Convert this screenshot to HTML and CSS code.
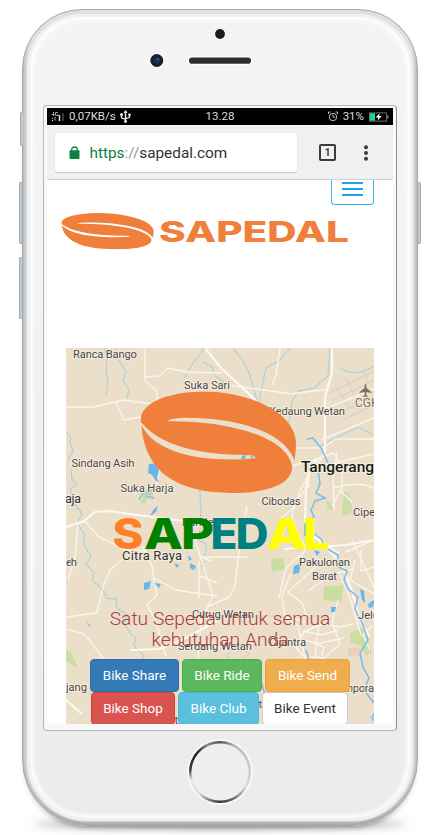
FILE: index.html
```html
<!DOCTYPE html>
<html lang="id">
<head>
<meta charset="utf-8">
<title>Sapedal</title>
<link rel="stylesheet" href="styles.css">
</head>
<body>
<svg class="defs" aria-hidden="true">
  <symbol id="bowl" viewBox="140.500 391 155.500 102" preserveAspectRatio="none">
    <path d="M168 421C215 420 284 432 292 465C294 485 265 493 232 493C170 493 144 466 141.500 425C158 458 215 462 255 458C256 456.500 254 455 250 455C215 455 165 451 141 422C138 402 170 391 205 391C255 392 296 415 296 443C296 450 295 455 294.500 460C283 429 230 417 185 417.500C175 418 169 418.500 168 421Z"/>
  </symbol>
</svg>
<div class="phone">
  <i class="key mute"></i><i class="key up"></i><i class="key down"></i><i class="key power"></i>
  <div class="face">
    <div class="top">
      <svg width="110" height="50" viewBox="148 24 110 50">
        <circle cx="220" cy="34" r="5.800" fill="#fff"/><circle cx="220" cy="34" r="4.900" fill="#1b1c1e"/>
        <circle cx="156.800" cy="60.500" r="7.500" fill="#fff"/><circle cx="156.800" cy="60.500" r="6.500" fill="#1c1e24"/><circle cx="157" cy="60.500" r="3.200" fill="#1c2a5c"/><circle cx="158" cy="59" r="1.200" fill="#405691"/>
        <rect x="188" y="56.500" width="64" height="8.500" rx="4.200" fill="#fff"/><rect x="189" y="57.500" width="62" height="6.300" rx="3.100" fill="#2a2e31"/>
      </svg>
    </div>
    <div class="bezel">
      <div class="screen">
        <div class="status">
          <div class="side">
            <svg width="14" height="12" viewBox="0 0 14 12"><g stroke="#ddd" fill="none"><path d="M.5 3.500h3M2.500 1v4M4.500 1.500h2.500M4.500 1.500v3h2.500v-1.500" stroke-width=".7"/><path d="M1.500 7v1M1.500 9v1M4 6v4" stroke-dasharray="1.200 .6"/><path d="M8.500 4v6" stroke-width="1.500"/><path d="M12 2v8" stroke="#888" stroke-width=".8"/></g></svg>
            <span class="rate">0,07KB/s</span>
            <svg width="11" height="13" viewBox="0 0 11 13" fill="none" stroke="#eee" stroke-width="1.400"><path d="M5.500 1v11M1.500 4v3.500q0 1 4 1.500M9.500 4v3q0 1-4 1.500"/><path d="M5.500 0l2 3h-4z" fill="#eee" stroke="none"/><circle cx="5.500" cy="11.500" r="1.400" fill="#eee" stroke="none"/><circle cx="1.500" cy="4.500" r=".8"/><path d="M8.300 3.600h2.400v2h-2.400z" fill="#eee" stroke="none"/></svg>
          </div>
          <span class="clock">13.28</span>
          <div class="side end">
            <svg width="10" height="11" viewBox="0 0 10 11" fill="none" stroke="#ccc" stroke-width=".9"><circle cx="5" cy="6" r="3.700"/><path d="M5 3.500v2.700h2M.5 3.200V1h2M9.500 3.200V1h-2"/></svg>
            <span class="percent">31%</span>
            <svg width="20" height="10" viewBox="0 0 20 10"><rect x=".5" y=".9" width="17" height="8.200" fill="none" stroke="#888" stroke-width=".8"/><rect x="1" y="1.300" width="5" height="7.400" fill="#18db8c"/><path d="M10.500 1.300L6.700 5.600h2.500l-.5 3 4-4.500h-2.500z" fill="#fff"/><path d="M18.800 3.500v3" stroke="#aaa"/></svg>
          </div>
        </div>
        <div class="browser">
          <div class="address">
            <svg width="11" height="14" viewBox="0 0 11 14"><path d="M2.700 6V3.600q0-2.600 2.800-2.600t2.800 2.600V6" fill="none" stroke="#0b8043" stroke-width="1.300"/><rect x=".5" y="4.200" width="10" height="8.800" rx="1" fill="#0b8043"/></svg>
            <span class="url"><b>https</b><i>://</i>sapedal.com</span>
          </div>
          <span class="tabs">1</span>
          <svg class="more" width="6" height="16" viewBox="0 0 6 16" fill="#383b40"><circle cx="3" cy="2.200" r="2"/><circle cx="3" cy="8" r="2"/><circle cx="3" cy="13.700" r="2"/></svg>
        </div>
        <div class="page">
          <div class="menu"><span></span><span></span><span></span></div>
          <svg class="brand" width="290" height="38" viewBox="61 212 290 38">
            <use href="#bowl" x="61.300" y="213" width="92.500" height="36.300" fill="#f07f3c"/>
            <text class="word" x="159" y="241.500" font-size="28" textLength="190" lengthAdjust="spacingAndGlyphs" fill="#f07f3c">SAPEDAL</text>
          </svg>
          <div class="hero">
            <svg class="map" width="308" height="376" viewBox="66 348 308 376">
              <rect x="66" y="348" width="308" height="376" fill="#ebdfca"/>
              <g fill="#c9dea0">
                <path d="M66 650l5 2 7 16-12-7zM141 489l4 1 3 9-4 6-3-3 2-5zM150 488l4 1-1 8-3-1zM271 559l12-2 2 12-13 3zM324 587l20-2-3 17-18-2zM344 491l5 2 4 20-11 3zM326 500l6 4 2 6-6-1zM350 634l12-6 10 24-6 4-5-10-10-3z"/>
              </g>
              <path d="M348 648h12v8h-12z" fill="#e9cfbc"/>
              <g fill="none" stroke="#d8d0c4" stroke-width="1.200"><path d="M329 393l45-22M334 400l40-20M335 386l15 22M346 379l12 24M364 372l4 10M342 420l32-15M345 410l29-12M226 655l13-11 10 10-14 12z"/></g>
              <g fill="none" stroke="#abd0d8" stroke-width="1.100">
                <path d="M105 348l2 12-1 12 2 10-2 14M115 348l4 12 7 12-3 8 6 10-2 8M205 348l-12 15-9 15M203 362l9 5 3 9 9 6M233 348l10 13 7 14 7 26M290 348l-10 12-14 8-8 38M330 348l-2 28-14 12-15 3-7 10-5 36M340 368q16 10 34-2M320 446l20-10 18-9 16 8M66 432l5 6-1 5 3 8-5 9M71 470l1 9 5 6-7 4 3 10"/>
                <path d="M75 504l7 10-5 10 7 9 0 12 7 11-5 8 8 9-2 7 11 10 4 8 9 1 1 9 10 7-3 8 7 11 5 4-2 8 10 10-5 10-9 6 2 9-3 12M200 490l1 28-2 22 8 5-5 22" stroke-dasharray="3 1" stroke-width="1.500"/>
                <path d="M139 500l5-9 5 3 5-7M145 496l9 2" stroke="#8cc9d6" stroke-width="1.800"/>
              </g>
              <g fill="none" stroke="#faf5ec" stroke-width="1.400" stroke-linejoin="round">
                <path d="M145 348v33l12 10 0 12 21-5 17-6 50 14M145 377l14-1 9-8 19 4 35 1M116 402l8 18 16-3 10 14M66 407h27l30-7 60 8M280 348l-4 28-4 9M220 384l72 10 36-5"/>
                <path d="M325 409l49-20M321 440l53-22M292 448h30l14-9h38M326 465l48-11M291 466l20-5 23-8 8 15 0 20-10 18M322 458l-12 14-11 21-4 14-15 12M337 452l-4 28 1 30M333 488q30-8 41 1M340 490l12 12"/>
                <path d="M84 520l14 16 27 14 22 1M78 524l-3 35-7 20M142 546l10 20 2 14 3 15-10 10 8 14 6 20 5 17M154 578l22 12 19 3 22 3M213 596l-12 25-4 48M199 561v37M212 561l-13-4h48M200 576l17 7M213 596l-11-35-7-21M125 557l-14 12-7 15-5 20-2 9-31 4M66 629l18 5 7 8 14 19-8 22 4 20-3 21M160 465l-4 25M247 506l-8 45-4 35-6 11-22 10"/>
                <path d="M310 484l-16 20-4 28 16 14M306 550l-20 18-7 30M291 573l-9 23 3 20 20 6M318 565l-30 27 15 12 4 15M340 575l9 20 12 40M352 540l12 25 10 23M346 552l28-12M355 560l-5 20 24 14M361 550l0 21 13-4M308 591l24-16 20-6M286 617l12 9 7 33M205 611l17 2M338 600l-6 22 8 22-16 14-21-2-8-10 10-15 18-7 16 3 14-3M303 631l19 4 16-5M309 641l15 6-2 9M319 623l-4 34M296 640l25 3 23-5M373 625l-10 10 7 15"/>
              </g>
              <g fill="none" stroke="#fcf9f2" stroke-width="2.200"><path d="M332 348l0 25-7 24v55l-3 4M66 527l18-6 11-9 13-1 90 12M205 348l16 20 28 26 13 13M317 459l-7 10-4 20-1 34 6 11 28 20M284 549l62-4 28-5M313 535l29 29 10 27 9 32 9 14M304 660l8 26-4 18M66 700l16 14M130 650l30-1 30-13 30-17"/></g>
              <g fill="none" stroke="#76bcec" stroke-width="1.500">
                <path d="M307 439l6-1 8 10 7 15M318 470l2 14-4 9 9 5-10 3-4 9 3 7-9 7v12M310 531l11 8 5 9 12 7-1 11 10 5-3 9 4 9 10 8-3 12 7 14 6 17-8 13 3 14 6 11-5 12 9 12 5-6-2 14-4 8 8 11-9 12 2 14-7 8M261 681l6 20M306 650l3 10"/>
              </g>
              <g fill="#69b6ed"><path d="M149 464l8-1 2 8-2 7 2 4-3-1-4-6-4-2zM154 509l4-3-2 6-6 4zM144 583l7-2-2 8-5 1zM154 583l7 1-2 4zM174 563l5 2-2 3zM188 555l4 4-3 2zM190 563l6 3-2 4-4-2zM294 566l7-3-2 10-6 1zM314 550l6 2-3 4zM360 589l4 2 1 12-3-3zM368 604l7-5-2 8-4 1zM331 607l5 0-1 5-4 0zM86 621l5 5-1 1zM242 456l4-1-1 4-4 0zM250 456l5 1-4 1z"/></g>
              <path d="M365.500 384q1 0 1 4l5 4v1l-5-1-.3 3 1.500 1v1l-2.200-.5-2.200.5v-1l1.500-1-.3-3-5 1v-1l5-4q0-4 1-4z" fill="#80705f"/>
              <g class="labels">
                <text x="73" y="358" textLength="64">Ranca Bango</text><text x="184" y="389" textLength="46">Suka Sari</text><text x="269" y="414.500" textLength="76">Kedaung Wetan</text>
                <text x="355" y="407" class="airport">CGK</text><text x="71.500" y="466.500" textLength="63">Sindang Asih</text><text x="301" y="471.500" class="city" textLength="73">Tangerang</text>
                <text x="120.500" y="491.500" textLength="53">Suka Harja</text><text x="65" y="503" class="town" textLength="16">aja</text><text x="261.500" y="505" textLength="39">Cibodas</text><text x="353" y="516">Cipe</text>
                <text x="182" y="526">Bunder</text><text x="122" y="559.500" class="town" textLength="60">Citra Raya</text><text x="66" y="566" textLength="11">eh</text><text x="299" y="566" textLength="51">Pakulonan</text><text x="312" y="579.500" textLength="25">Barat</text>
                <text x="192" y="618" textLength="62">Curug Wetan</text><text x="358" y="618.500">Jelu</text><text x="178" y="650" textLength="74">Serdang Wetan</text><text x="269" y="645.500" textLength="37">Cijantra</text>
                <text x="66" y="691" textLength="21">jang</text><text x="347" y="692" textLength="27">npora</text><text x="258.500" y="708">t</text><text x="174.500" y="724">t</text>
              </g>
              <use href="#bowl" x="140.500" y="391.500" width="155.500" height="101.500" fill="#f07f3c"/>
              <g class="word" font-size="42.500">
                <text x="112.500" y="549" textLength="31" lengthAdjust="spacingAndGlyphs" fill="#ff7f27">S</text><text x="144" y="549" textLength="39" lengthAdjust="spacingAndGlyphs" fill="#008000">A</text><text x="181" y="549" textLength="33" lengthAdjust="spacingAndGlyphs" fill="#008000">P</text><text x="210.500" y="549" textLength="27" lengthAdjust="spacingAndGlyphs" fill="#008080">E</text><text x="235.500" y="549" textLength="33" lengthAdjust="spacingAndGlyphs" fill="#008080">D</text><text x="267" y="549" textLength="39" lengthAdjust="spacingAndGlyphs" fill="#ff0">A</text><text x="303" y="549" textLength="27" lengthAdjust="spacingAndGlyphs" fill="#ff0">L</text>
              </g>
            </svg>
            <div class="intro">
              <h1>Satu Sepeda untuk semua kebutuhan Anda</h1>
              <div class="row"><a class="btn share">Bike Share</a><a class="btn ride">Bike Ride</a><a class="btn send">Bike Send</a></div>
              <div class="row second"><a class="btn shop">Bike Shop</a><a class="btn club">Bike Club</a><a class="btn event">Bike Event</a></div>
            </div>
          </div>
        </div>
      </div>
    </div>
    <div class="home"></div>
  </div>
</div>
</body>
</html>
```

FILE: styles.css
```css
* { box-sizing: border-box; }
body { margin: 0; height: 835px; overflow: hidden; background: #fff; font-family: Roboto, "Liberation Sans", sans-serif; }
svg { display: block; flex: none; }
.defs { position: absolute; width: 0; height: 0; }
.phone {
  position: relative; width: 396px; height: 817px; margin: 9px 0 0 22px; padding: 4px;
  border: 1.500px solid #a5a9ac; border-radius: 60px 60px 66px 66px;
  background: linear-gradient(90deg, #c5cacd, #dde1e4 6px, #dde1e4 389px, #c5cacd);
  box-shadow: 0 5px 6px -5px rgba(0,0,0,.5), inset 0 -3px 3px #a4a6a7;
}
.phone::before { content: ""; position: absolute; z-index: -1; left: 10px; right: 10px; bottom: -4px; height: 10px; border-radius: 50%; background: #b5b5b5; filter: blur(4px); }
.key { position: absolute; width: 3px; border-radius: 2px 0 0 2px; background: #c4c9cc; border: 1px solid #a5abaf; border-right: 0; }
.mute { left: -3px; top: 102px; height: 34px; }
.up { left: -4px; top: 172px; height: 62px; }
.down { left: -4px; top: 247px; height: 62px; }
.power { right: -4px; top: 172px; height: 62px; transform: scaleX(-1); }
.face {
  display: flex; flex-direction: column; align-items: center; height: 100%;
  border: 3px solid #eff1f2; border-radius: 55px 55px 61px 61px;
  background: linear-gradient(#f4f4f4, #f1f1f1 50%, #ebebeb); box-shadow: inset 0 0 5px 3px #fff;
}
.top { height: 88px; width: 377px; padding: 7px 0 0 116.500px; flex: none; }
.bezel { width: 354px; height: 626px; flex: none; padding: 1px 2px 5px; border: 1.500px solid #b5b7b9; border-right-color: #8b8d8f; border-radius: 4px; background: #f8f8f9; }
.screen { width: 346px; height: 616px; margin: 1px 0 0 1px; overflow: hidden; background: #fff; display: flex; flex-direction: column; }
.status { height: 17px; flex: none; background: #000; color: #ddd; display: grid; grid-template-columns: 1fr auto 1fr; align-items: center; padding: 0 4px; font-size: 11.500px; line-height: 17px; }
.side { display: flex; align-items: center; gap: 4px; }
.end { justify-content: flex-end; gap: 5px; }
.browser { height: 55px; flex: none; border-top: 1px solid #fafafa; border-bottom: 1px solid #cfcfcf; background: #f0f0f0; display: flex; align-items: center; padding-left: 8px; }
.address { width: 242px; height: 39px; border-radius: 2px; background: #fff; box-shadow: 0 1px 1px #ccc, 0 0 1px #ccc; display: flex; align-items: center; padding-left: 13.500px; gap: 10px; }
.url { font-size: 15.350px; color: #333; }
.url b { font-weight: 400; color: #0b8043; }
.url i { font-style: normal; color: #999; }
.tabs { width: 17px; height: 17px; margin-left: 22px; border: 2px solid #383b40; border-radius: 2px; color: #383b40; font-size: 10px; font-weight: 700; line-height: 13.500px; text-align: center; }
.more { margin-left: 27px; }
.page { flex: 1; min-height: 0; display: flex; flex-direction: column; }
.menu { align-self: flex-end; margin-right: 19px; width: 43px; height: 25px; flex: none; border: 1px solid #36b7ee; border-top: 0; border-radius: 0 0 4px 4px; padding: 2px 10px 0; display: flex; flex-direction: column; gap: 4px; }
.menu span { height: 2px; background: #1ca8e8; }
.brand { margin: 7px 0 0 14px; }
.word { font-family: Inter, "Open Sans", sans-serif; font-weight: 800; }
.hero { position: relative; flex: none; width: 308px; height: 376px; margin: 98px 0 0 19px; overflow: hidden; }
.map { position: absolute; inset: 0; }
.labels { font-size: 11.200px; font-weight: 400; fill: #45484b; stroke: #f6eddd; stroke-width: 2px; paint-order: stroke; }
.labels text { stroke-linejoin: round; }
.labels .city { font-size: 15.500px; font-weight: 500; fill: #171a1d; }
.labels .town { font-size: 13px; fill: #303336; }
.labels .airport { font-size: 12px; fill: #75706c; }
.intro { position: relative; padding-top: 260px; }
h1 { margin: 0 auto 1px; width: 240px; font-size: 19.250px; line-height: 21px; padding-bottom: 8px; font-weight: 300; text-align: center; color: #a93d40; }
.row { display: flex; gap: 3px; padding-left: 24px; }
.second { padding-left: 25px; }
.btn { height: 33px; border-radius: 4px; border: 1px solid; color: #fff; font-size: 13.500px; line-height: 31px; text-align: center; }
.share { width: 89px; background: #337ab7; border-color: #2e6da4; }
.ride { width: 80px; background: #5cb85c; border-color: #4cae4c; }
.send { width: 85px; background: #f0ad4e; border-color: #eea236; }
.shop { width: 84px; background: #d9534f; border-color: #d43f3a; }
.club { width: 81px; background: #5bc0de; border-color: #46b8da; }
.event { width: 86px; background: #fff; border-color: #ccc; color: #333; }
.home {
  width: 62px; height: 62px; margin-top: 10px; border-radius: 50%;
  background: radial-gradient(circle, #eee 28px, transparent 29px), conic-gradient(#555, #bbb 30deg, #ccc 90deg, #ddd 120deg, #777 150deg, #333 180deg, #777 200deg, #ddd 225deg, #e8e8e8 255deg, #333 275deg, #222 310deg, #888 335deg, #555 360deg);
  box-shadow: 0 0 0 2px #f8f8f8;
}
```
